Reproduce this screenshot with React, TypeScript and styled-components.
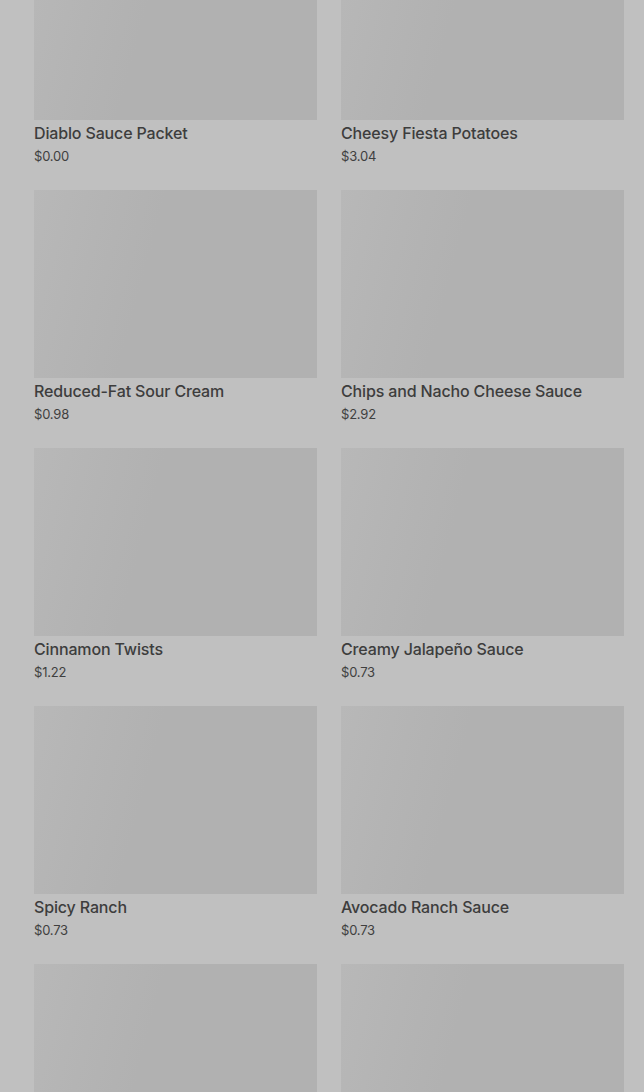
import React from "react";
import styled, { createGlobalStyle } from "styled-components";

const Global = createGlobalStyle`
  html, body { margin: 0; padding: 0; background: #c0c0c0; }
  body { font-family: Inter, "Noto Sans", Roboto, sans-serif; overflow: hidden; }
`;

const Page = styled.main`
  height: 1092px;
  overflow: hidden;
  background: #c0c0c0;
`;

const Grid = styled.div`
  display: grid;
  grid-template-columns: 283px 283px;
  column-gap: 24px;
  row-gap: 25px;
  padding: 0 20px 0 34px;
  margin-top: -68px;
`;

const Card = styled.article`
  display: flex;
  flex-direction: column;
`;

const Thumb = styled.div`
  height: 188px;
  background: linear-gradient(105deg, #b8b8b8 0%, #b4b4b4 22%, #b1b1b1 40%, #b1b1b1 100%);
`;

const Title = styled.h3`
  margin: 2px 0 0;
  font-size: 16px;
  line-height: 22px;
  font-weight: 500;
  color: #3d3d3d;
  letter-spacing: -0.15px;
`;

const Price = styled.span`
  margin-top: 3px;
  font-size: 13px;
  line-height: 18px;
  color: #3f3f3f;
  letter-spacing: -0.2px;
`;

const items = [
  ["Diablo Sauce Packet", "$0.00"],
  ["Cheesy Fiesta Potatoes", "$3.04"],
  ["Reduced-Fat Sour Cream", "$0.98"],
  ["Chips and Nacho Cheese Sauce", "$2.92"],
  ["Cinnamon Twists", "$1.22"],
  ["Creamy Jalapeño Sauce", "$0.73"],
  ["Spicy Ranch", "$0.73"],
  ["Avocado Ranch Sauce", "$0.73"],
  ["", ""],
  ["", ""],
];

export default function App() {
  return (
    <Page>
      <Global />
      <Grid>
        {items.map(([name, price], i) => (
          <Card key={i}>
            <Thumb />
            {name && <Title>{name}</Title>}
            {price && <Price>{price}</Price>}
          </Card>
        ))}
      </Grid>
    </Page>
  );
}
